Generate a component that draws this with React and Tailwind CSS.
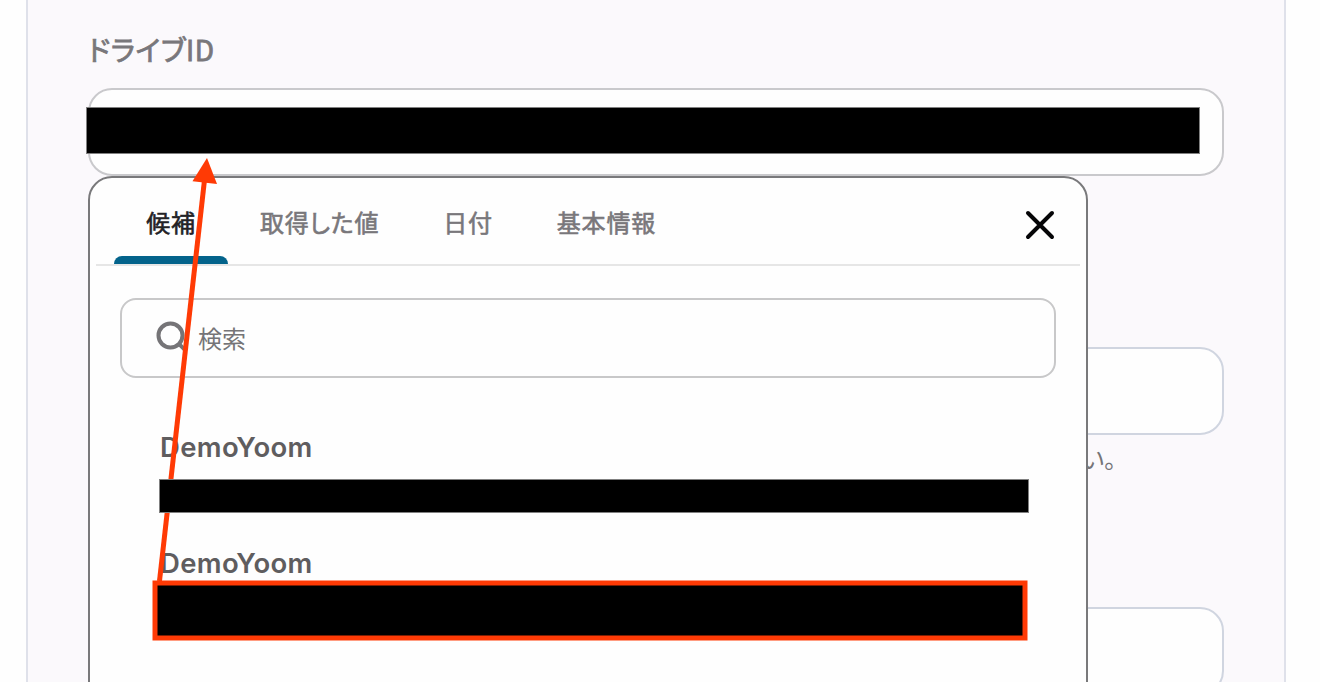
import clsx from 'clsx';

const tabs = ['候補', '取得した値', '日付', '基本情報'];

function Field({ className, children }) {
    return (
        <div className={clsx('h-[88px] shrink-0 rounded-3xl border-2 bg-[#fefefe]', className)}>
            {children}
        </div>
    );
}

function Masked({ className }) {
    return <div className={clsx('border border-[#808080] bg-black', className)} />;
}

function Tab({ label, active }) {
    return (
        <button
            type="button"
            className={clsx(
                'flex h-[86px] flex-col items-center justify-between px-8 pt-[28px] text-2xl leading-8 tracking-[0.8px] [-webkit-text-stroke:0.6px]',
                active ? 'relative text-[#222225]' : 'text-[#79777b]'
            )}
        >
            {label}
            {active && <span className="-mx-8 h-2 w-[114px] rounded-t-lg bg-[#03638b]" />}
        </button>
    );
}

function CloseIcon() {
    return (
        <svg viewBox="0 0 30 30" className="mt-[32px] mr-[25px] h-[30px] w-[30px]" fill="none" stroke="#050507" strokeWidth="4" strokeLinecap="round">
            <path d="M3 3L27 27M27 3L3 27" />
        </svg>
    );
}

function SearchIcon() {
    return (
        <svg viewBox="0 0 32 32" className="mb-[3px] h-8 w-8" fill="none" stroke="#757477" strokeWidth="4">
            <circle cx="14.5" cy="14.5" r="12" />
            <path d="M22.4 22.4L29.4 29.4" />
        </svg>
    );
}

function Suggestions() {
    return (
        <div className="absolute top-[86px] -left-0.5 h-[560px] w-[1000px] rounded-3xl border-2 border-[#79797b] bg-[#fefefe]">
            <div className="mx-1.5 flex justify-between border-b-2 border-[#e6e6e6]">
                <div className="ml-[18px] flex">
                    {tabs.map((tab, index) => (
                        <Tab key={tab} label={tab} active={index === 0} />
                    ))}
                </div>
                <CloseIcon />
            </div>

            <div className="mx-[30px] mt-8 flex h-20 items-center rounded-2xl border-2 border-[#c8c8c9] pl-[34px]">
                <SearchIcon />
                <span className="ml-[10px] text-2xl leading-8 text-[#757477]">検索</span>
            </div>

            <div className="pl-[69px]">
                <p className="mt-[53px] pl-[1px] font-[Inter] text-[27.5px] leading-8 font-semibold tracking-[0.35px] text-[#5f5d5f]">DemoYoom</p>
                <Masked className="relative z-10 mt-4 h-[34px] w-[870px]" />
                <p className="mt-[34px] pl-[1px] font-[Inter] text-[27.5px] leading-8 font-semibold tracking-[0.35px] text-[#5f5d5f]">DemoYoom</p>
                <div className="mt-1 -ml-[3px] h-[54px] w-[868px] bg-black" />
            </div>

            {/* highlight box and arrow up to the field */}
            <svg viewBox="140 150 900 500" className="absolute -top-7 left-[50px] h-[500px] w-[900px]" fill="none" stroke="#ff3a05">
                <rect x="155" y="583" width="870" height="55" strokeWidth="5" />
                <path d="M159.5 581L204.5 180" strokeWidth="5" />
                <path d="M207 158L192.5 181.2L217 184Z" fill="#ff3a05" stroke="none" />
            </svg>
        </div>
    );
}

export default function App() {
    return (
        <div className="h-[682px] w-[1320px] overflow-hidden bg-[#fefefe] pl-[26px] font-['Noto_Sans_CJK_JP',sans-serif] [font-feature-settings:'palt']">
            <div className="flex h-full w-[1260px] flex-col border-x-2 border-[#dfe1ea] bg-[#fbf9fc] px-[60px] pt-[33px]">
                <label className="h-[55px] shrink-0 text-[28px] leading-8 tracking-[0.6px] text-[#79777b] [-webkit-text-stroke:0.8px]">ドライブID</label>
                <Field className="relative z-10 border-[#c9c9cc]">
                    <Masked className="mt-[17px] -ml-1 h-[47px] w-[1114px]" />
                    <Suggestions />
                </Field>

                <Field className="mt-[171px] border-[#d0d5e0]" />
                <p className="mt-[7px] h-8 shrink-0 pr-[108px] text-right text-2xl leading-8 text-[#757477]">してください。</p>
                <Field className="mt-[133px] border-[#d0d5e0]" />
            </div>
        </div>
    );
}
